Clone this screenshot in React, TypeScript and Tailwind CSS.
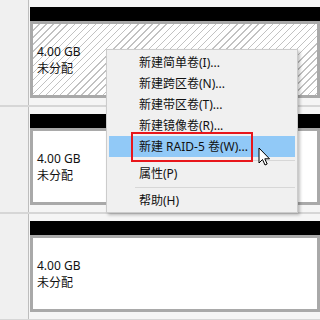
import React from 'react';

const FONT = "font-['Noto_Sans','Noto_Sans_CJK_SC',sans-serif]";

interface DiskRowProps {
  hatched?: boolean;
}

// 一行磁盘：左侧标签列 + 黑色标题条 + 未分配分区框
function DiskRow({ hatched }: DiskRowProps) {
  return (
    <div className="flex h-[107px] border-b-2 border-[#d6d6d6]">
      <div className="w-[29px] shrink-0 bg-[#f0f0f0] border-r border-[#bdbdbd]" />
      <div className="flex-1 pl-[1px] pt-[7px] flex flex-col bg-[#f5f5f5]">
        <div className="h-[14px] bg-black" />
        <div
          className={`h-[77px] border-[3px] border-[#a9a9a9] pl-[4px] flex flex-col justify-center text-[12px] leading-[17px] text-[#111111] ${
            hatched
              ? 'bg-[image:repeating-linear-gradient(135deg,#ffffff_0px,#ffffff_4px,#c2c2c2_4px,#c2c2c2_5px)]'
              : 'bg-white'
          }`}
        >
          <div>4.00 GB</div>
          <div>未分配</div>
        </div>
      </div>
    </div>
  );
}

function MenuItem({ label, active }: { label: string; active?: boolean }) {
  return (
    <div
      className={`h-[21px] flex items-center pl-[30px] text-[12px] text-[#111111] ${
        active ? 'bg-[#91c9f7]' : ''
      }`}
    >
      {label}
    </div>
  );
}

function Separator() {
  return (
    <div className="h-[6px] flex items-center pl-[26px]">
      <div className="h-px w-full bg-[#d7d7d7]" />
    </div>
  );
}

export default function App() {
  return (
    <div className={`relative w-[320px] h-[320px] overflow-hidden bg-[#f0f0f0] ${FONT}`}>
      <DiskRow hatched />
      <DiskRow />
      <DiskRow />

      {/* 右键菜单 */}
      <div className="absolute left-[106px] top-[49px] w-[192px] bg-[#f0f0f0] border border-[#cccccc] shadow-[2px_2px_3px_rgba(0,0,0,0.25)] pt-[2px] pb-[1px] px-[2px]">
        <MenuItem label="新建简单卷(I)..." />
        <MenuItem label="新建跨区卷(N)..." />
        <MenuItem label="新建带区卷(T)..." />
        <MenuItem label="新建镜像卷(R)..." />
        <MenuItem label="新建 RAID-5 卷(W)..." active />
        <Separator />
        <MenuItem label="属性(P)" />
        <Separator />
        <MenuItem label="帮助(H)" />
      </div>

      {/* 红色标注框 */}
      <div className="absolute left-[131px] top-[132px] w-[122px] h-[30px] border-2 border-[#e8161b]" />

      {/* 鼠标指针 */}
      <svg className="absolute left-[258px] top-[147px]" width="14" height="20" viewBox="0 0 14 20">
        <path
          d="M1 1 L1 16 L4.5 12.5 L7 18 L9.2 17 L6.8 11.8 L11.5 11.8 Z"
          fill="#ffffff"
          stroke="#000000"
          strokeWidth="1"
          strokeLinejoin="miter"
        />
      </svg>
    </div>
  );
}
